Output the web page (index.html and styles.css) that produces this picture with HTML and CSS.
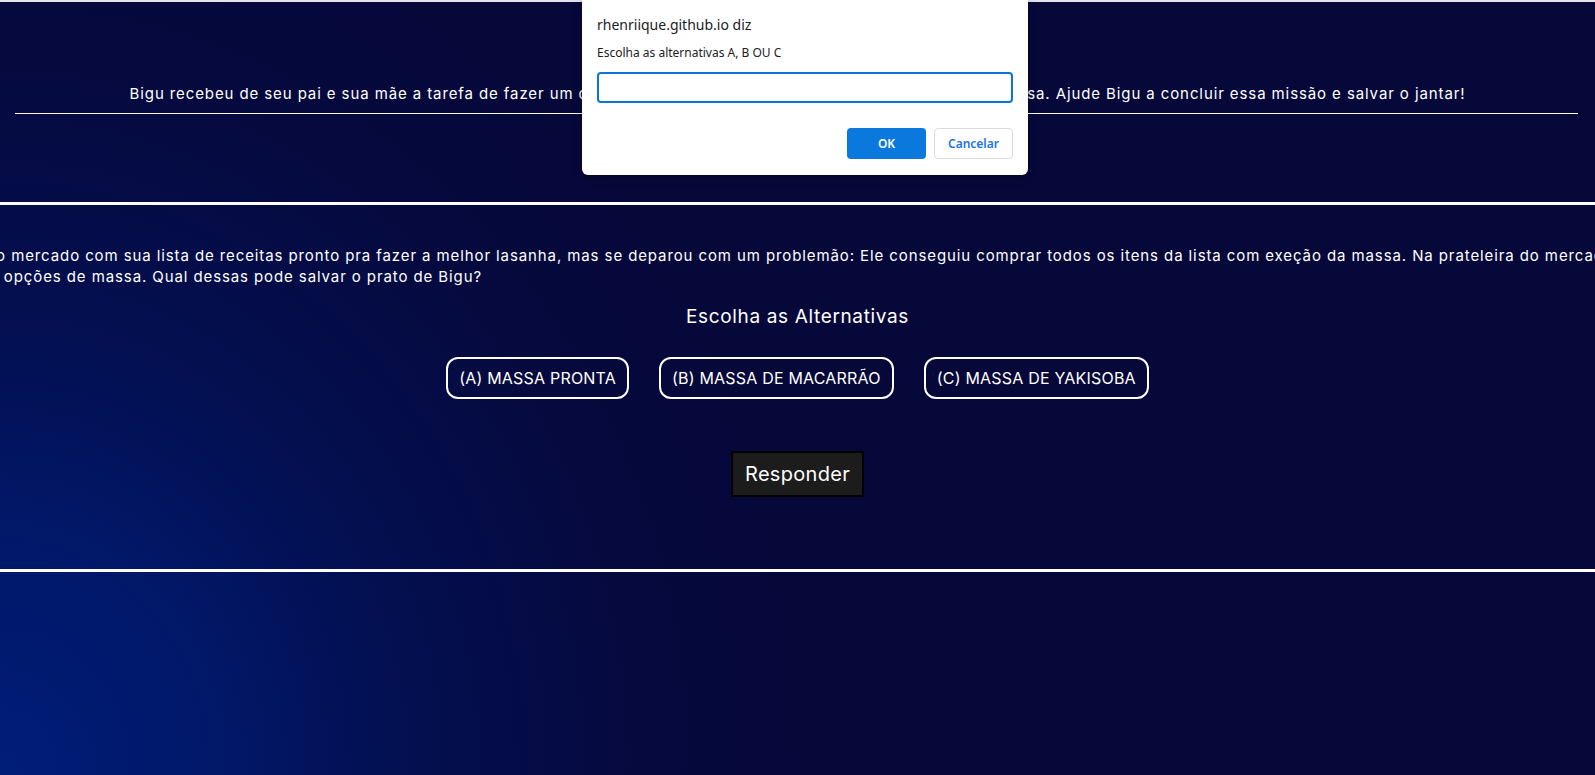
FILE: index.html
```html
<!DOCTYPE html>
<html lang="pt-BR">
<head>
<meta charset="utf-8">
<title>Bigu</title>
<link rel="stylesheet" href="styles.css">
</head>
<body>
<div class="page">
  <div class="top-edge"></div>
  <section class="intro">
    <p class="intro-text">Bigu recebeu de seu pai e sua mãe a tarefa de fazer um delicioso jantar para toda a família que vai visitar sua casa. Ajude Bigu a concluir essa missão e salvar o jantar!</p>
    <hr class="rule">
  </section>
  <section class="quiz">
    <div class="story-wrap">
      <p class="story">Bigu foi ao mercado com sua lista de receitas pronto pra fazer a melhor lasanha, mas se deparou com um problemão: Ele conseguiu comprar todos os itens da lista com exeção da massa. Na prateleira do mercado havia três opções de massa. Qual dessas pode salvar o prato de Bigu?</p>
    </div>
    <h2 class="quiz-title">Escolha as Alternativas</h2>
    <div class="options">
      <button class="option">(A) MASSA PRONTA</button>
      <button class="option">(B) MASSA DE MACARRÃO</button>
      <button class="option">(C) MASSA DE YAKISOBA</button>
    </div>
    <button class="submit">Responder</button>
  </section>
  <section class="bottom"></section>
</div>

<div class="dialog">
  <p class="dialog-title">rhenriique.github.io diz</p>
  <p class="dialog-msg">Escolha as alternativas A, B OU C</p>
  <div class="dialog-input"></div>
  <div class="dialog-actions">
    <button class="btn-ok">OK</button>
    <button class="btn-cancel">Cancelar</button>
  </div>
</div>
</body>
</html>
```

FILE: styles.css
```css
* { box-sizing: border-box; }

html, body {
  margin: 0;
  padding: 0;
  height: 775px;
  overflow: hidden;
}

body {
  position: relative;
  font-family: Inter, "Open Sans", sans-serif;
  color: #fff;
  background: radial-gradient(ellipse 820px 920px at 0 100%, #001d78 0%, #01186a 25%, #030f50 50%, #06093d 80%, #06083a 100%);
  background-color: #06083a;
}

.page {
  display: flex;
  flex-direction: column;
}

.top-edge {
  height: 2px;
  background: #e4e4e8;
}

.intro {
  height: 203px;
  padding-top: 83px;
  border-bottom: 3px solid #fff;
  display: flex;
  flex-direction: column;
  align-items: center;
}

.intro-text {
  margin: 0;
  font-size: 15px;
  line-height: 18px;
  letter-spacing: 0.9px;
  white-space: nowrap;
  text-align: center;
}

.rule {
  align-self: stretch;
  margin: 10px 17px 0 15px;
  border: 0;
  height: 1px;
  background: #fff;
}

.quiz {
  height: 367px;
  border-bottom: 3px solid #fff;
  display: flex;
  flex-direction: column;
  align-items: center;
  padding-top: 40px;
}

.story-wrap {
  align-self: stretch;
  display: flex;
}

.story {
  flex-shrink: 0;
  width: 1705px;
  margin: 0 0 0 -79px;
  font-size: 15px;
  line-height: 21px;
  letter-spacing: 0.9px;
  text-align: left;
}

.quiz-title {
  margin: 18px 0 0;
  font-size: 19px;
  font-weight: 400;
  line-height: 24px;
  letter-spacing: 0.65px;
}

.options {
  display: flex;
  gap: 30px;
  margin-top: 28px;
}

.option {
  height: 42px;
  padding: 0 11px;
  border: 2px solid #fff;
  border-radius: 12px;
  background: transparent;
  color: #fff;
  font-family: inherit;
  font-size: 16px;
  letter-spacing: 0.2px;
}

.submit {
  margin-top: 52px;
  width: 133px;
  height: 46px;
  border: 2px solid #000;
  background: #1c1c1c;
  color: #fff;
  font-family: inherit;
  font-size: 20px;
  letter-spacing: 0.3px;
}

.bottom {
  flex: 1;
}

/* Browser prompt dialog */
.dialog {
  position: absolute;
  left: 582px;
  top: 0;
  width: 446px;
  height: 175px;
  padding: 15px 15px 0 15px;
  background: #fff;
  border-radius: 0 0 6px 6px;
  box-shadow: 0 2px 8px rgba(0, 0, 0, 0.35);
  font-family: "Noto Sans", "Open Sans", sans-serif;
  color: #202124;
}

.dialog-title {
  margin: 0;
  font-size: 14px;
  line-height: 20px;
}

.dialog-msg {
  margin: 9px 0 0;
  font-size: 12px;
  line-height: 17px;
}

.dialog-input {
  margin-top: 11px;
  height: 31px;
  border: 2px solid #0a74da;
  border-radius: 4px;
}

.dialog-actions {
  display: flex;
  justify-content: flex-end;
  gap: 8px;
  margin-top: 25px;
}

.btn-ok,
.btn-cancel {
  width: 79px;
  height: 31px;
  border-radius: 4px;
  font-family: inherit;
  font-size: 12px;
  font-weight: 600;
}

.btn-ok {
  background: #0a78dc;
  border: 0;
  color: #fff;
}

.btn-cancel {
  background: #fff;
  border: 1px solid #dadce0;
  color: #1a73e8;
}
```
